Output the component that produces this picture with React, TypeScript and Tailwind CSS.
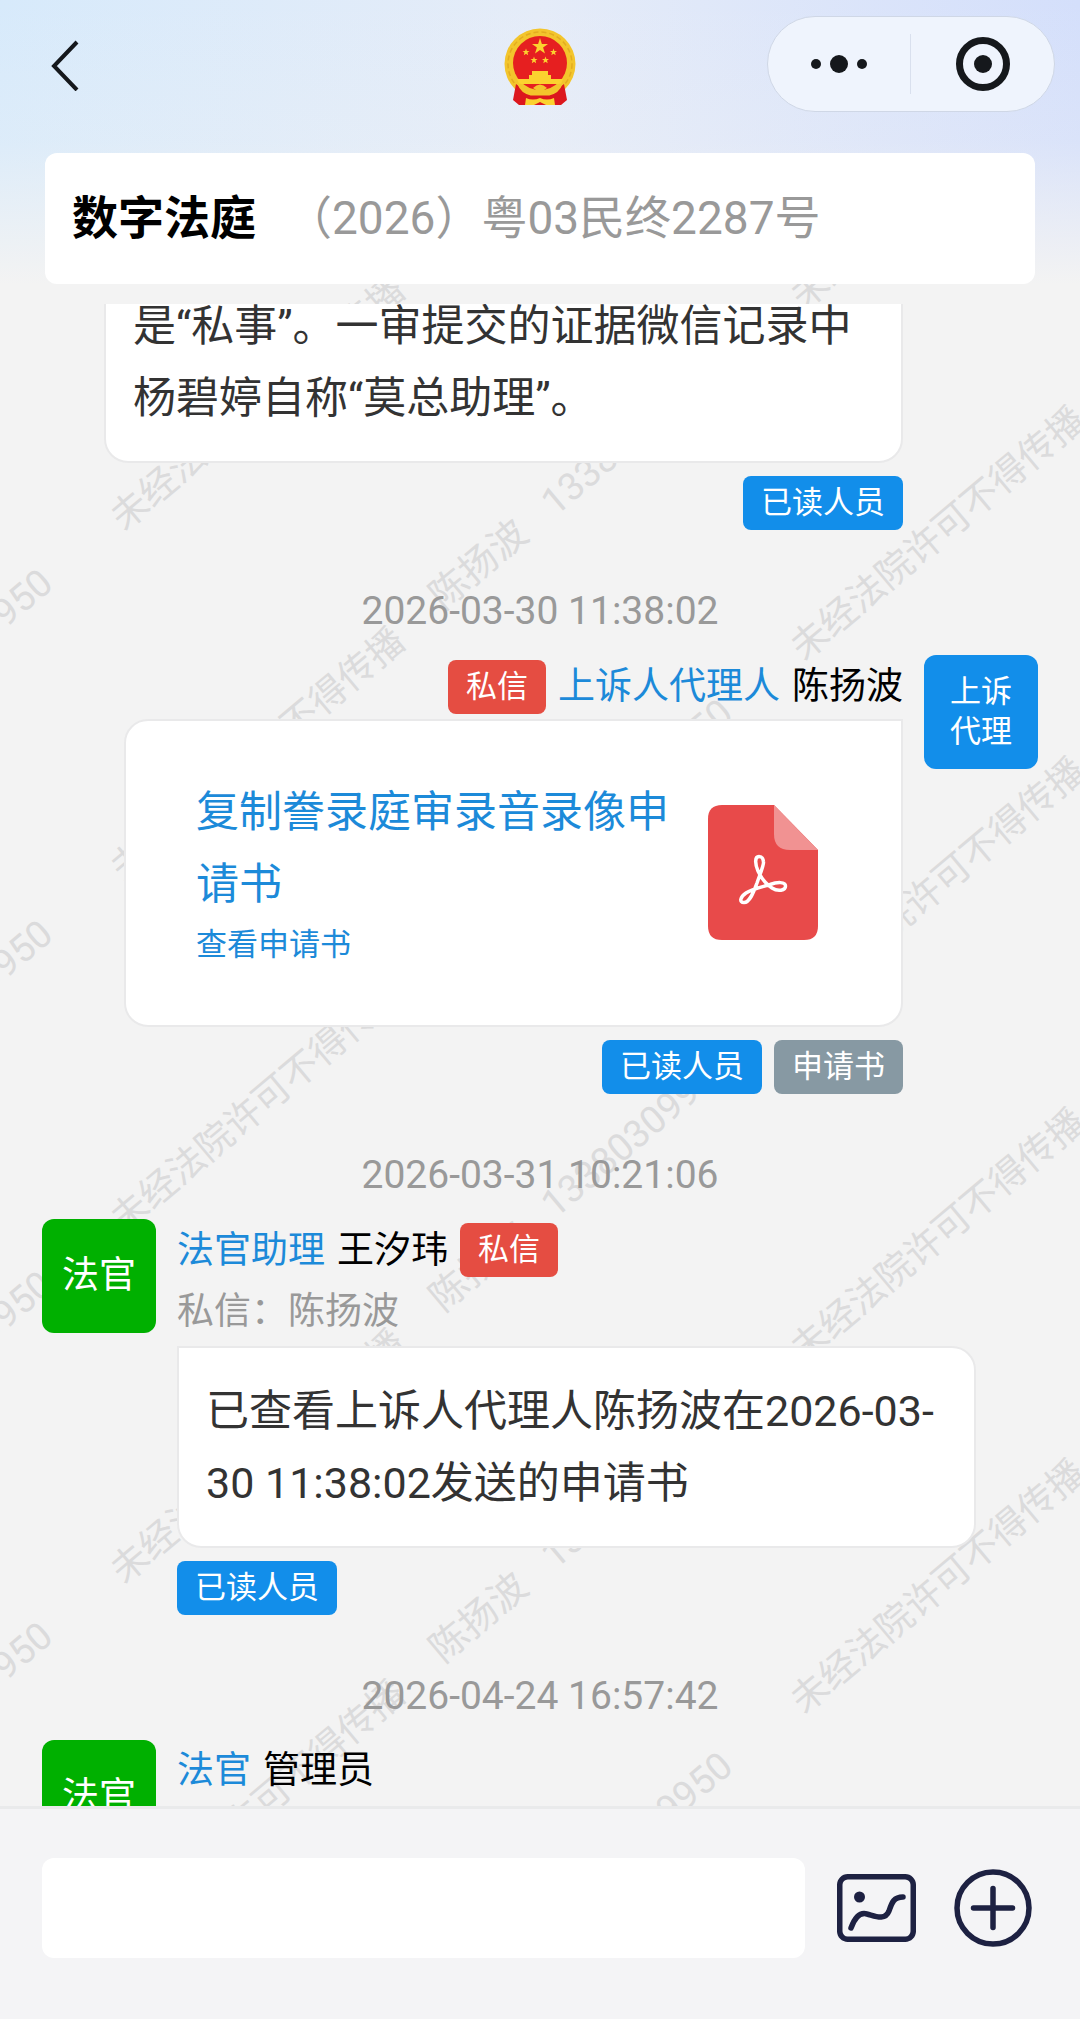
import { type ReactNode } from 'react';
import clsx from 'clsx';

type Side = 'left' | 'right';

// both watermark lines repeat on a slanted grid, [column, first row, last row]
const noticeColumns = [
    [0, 0, 4],
    [1, -1, 4],
];
const ownerColumns = [
    [-1, 1, 4],
    [0, 0, 4],
];

function spread(columns: number[][], x: number, y: number) {
    return columns.flatMap(([col, first, last]) =>
        Array.from({ length: last - first + 1 }, (_, i) => ({
            left: x + col * 680,
            top: y + col * 130 + (first + i) * 351,
        })),
    );
}

const notices = spread(noticeColumns, 116, 220);
const owners = spread(ownerColumns, 435, 298);

function Watermark() {
    return (
        <div aria-hidden="true" className="pointer-events-none absolute inset-0 overflow-hidden leading-none whitespace-nowrap text-[#dbdbdc]">
            {notices.map((pos) => (
                <div key={`${pos.left}:${pos.top}`} className="absolute origin-left -rotate-40 text-[37px]" style={pos}>
                    未经法院许可不得传播
                </div>
            ))}
            {owners.map((pos) => (
                <div key={`${pos.left}:${pos.top}`} className="absolute flex origin-left -rotate-40 gap-8 text-[38px]" style={pos}>
                    <span>陈扬波</span>
                    <span>13380309950</span>
                </div>
            ))}
        </div>
    );
}

function Emblem() {
    return (
        <svg viewBox="0 -6 72 84" className="h-[84px] w-[72px]" role="img" aria-label="国徽">
            <circle cx="36" cy="36" r="35.5" fill="#f3c52c" />
            <circle cx="36" cy="36" r="32" fill="none" stroke="#e3ac20" strokeWidth="1.5" strokeDasharray="5 3" />
            <circle cx="36" cy="35" r="27" fill="#e61f20" />
            <path d="M36 10 L37.9 16 H44 L39.1 19.6 L41 25.5 L36 21.9 L31 25.5 L32.9 19.6 L28 16 H34.1Z" fill="#fbd22f" />
            <g fill="#fbd22f">
                <path id="star" d="M22 20.5 L22.9 22.9 L25.5 23 L23.5 24.6 L24.2 27.2 L22 25.7 L19.8 27.2 L20.5 24.6 L18.5 23 L21.1 22.9Z" />
                <use href="#star" x="27.5" />
                <use href="#star" x="8" y="8" />
                <use href="#star" x="19.5" y="8" />
            </g>
            <path d="M28 43 H44 V47 H47 V51 H59 L57 56 H15 L13 51 H25 V47 H28Z" fill="#fbd22f" />
            <path d="M12 56 L27 67 H45 L60 56 L63 72 L57 77 H15 L9 72Z" fill="#dc171d" />
            <path d="M15 56 Q18 64 27 66 H45 Q54 64 57 56" fill="none" stroke="#f3c52c" strokeWidth="3" />
            <path d="M29 60 Q36 53 43 60 L40 62 H32Z" fill="#f3c52c" />
            <path d="M22 70 Q29 73 36 70 Q43 73 50 70 L51 77 H42 L36 74 L30 77 H21Z" fill="#fbd22f" />
        </svg>
    );
}

function PdfIcon() {
    return (
        <svg viewBox="0 0 110 135" className="h-[135px] w-[110px] shrink-0" aria-hidden="true">
            <path d="M14 0 H66 L110 45 V121 Q110 135 96 135 H14 Q0 135 0 121 V14 Q0 0 14 0Z" fill="#e84a4a" />
            <path d="M66 0 L110 45 H82 Q66 45 66 29Z" fill="#f19292" />
            <path
                d="M51 51.5 C46.5 51.5 47 59 50 66 C53 73 58 79 64 83 C70 87 77.5 85.5 77.5 81 C77.5 76.5 69 77 62 79.5 C54 82 44 84 38 88 C32 92 31 97.500 36 97.500 C42 97.500 46 86 49 78 C52 69 56 60 55.500 57 C55 53 54 51.500 51 51.500Z"
                fill="none"
                stroke="#fff"
                strokeWidth="3.5"
                strokeLinejoin="round"
            />
        </svg>
    );
}

function Timestamp({ children }: { children: ReactNode }) {
    return <time className="mt-[58px] mb-[21px] block text-center text-[39px] leading-[46px] text-[#999]">{children}</time>;
}

function PrivateTag() {
    return <span className="rounded-lg bg-[#e54d42] px-[18px] text-[31px] leading-[54px] text-white">私信</span>;
}

function Label({ children, grey }: { children: ReactNode; grey?: boolean }) {
    return (
        <button className={clsx('rounded-lg px-[18px] text-[31px] leading-[54px] text-white', grey ? 'bg-[#8799a3]' : 'bg-[#128eea]')}>
            {children}
        </button>
    );
}

function Avatar({ children, side }: { children: ReactNode; side: Side }) {
    return (
        <div
            className={clsx(
                'flex size-[114px] shrink-0 items-center justify-center rounded-xl text-center text-white',
                side === 'left' ? 'bg-[#00b000] text-[37px]' : 'bg-[#128eea] px-[26px] text-[31px] leading-[40px]',
            )}
        >
            {children}
        </div>
    );
}

function Bubble({ children, side, className }: { children: ReactNode; side: Side; className?: string }) {
    return (
        <div
            className={clsx(
                'rounded-3xl border-2 border-[#e9e9ea] bg-white text-[43px] leading-[72px] text-[#333]',
                side === 'left' ? 'rounded-tl-none' : 'rounded-tr-none',
                className,
            )}
        >
            {children}
        </div>
    );
}

function Message({ avatar, side, children }: { avatar: ReactNode; side: Side; children?: ReactNode }) {
    return (
        <div className={clsx('flex gap-[21px]', side === 'right' && 'flex-row-reverse')}>
            <Avatar side={side}>{avatar}</Avatar>
            <div className={clsx('flex min-w-0 flex-1 flex-col pt-1', side === 'left' ? 'pr-[62px]' : 'pl-[62px]')}>{children}</div>
        </div>
    );
}

function Header() {
    return (
        <header className="bg-linear-to-r from-[#d7eafb] via-[#e5ecf8] to-[#d4dffb]">
            <div className="bg-linear-to-b from-transparent via-[#f3f3f3]/20 via-50% to-[#f3f3f3] px-[45px] pt-4">
                <div className="-mr-5 grid h-24 grid-cols-3 items-center">
                    <button aria-label="返回" className="justify-self-start">
                        <svg viewBox="0 0 40 54" className="h-[54px] w-10" fill="none" stroke="#15181c" strokeWidth="4">
                            <path d="M32 5 L9 29 L32 53" />
                        </svg>
                    </button>
                    <div className="-ml-5 justify-self-center">
                        <Emblem />
                    </div>
                    <div className="flex h-24 w-72 items-center justify-self-end rounded-full border border-[#cfd7e6] bg-[#eff4fd]">
                        <button aria-label="更多" className="flex flex-1 items-center justify-center gap-[9px]">
                            <span className="size-[10px] rounded-full bg-[#15181c]" />
                            <span className="size-[18px] rounded-full bg-[#15181c]" />
                            <span className="size-[10px] rounded-full bg-[#15181c]" />
                        </button>
                        <span className="h-[60px] w-px bg-[#d9e0ee]" />
                        <button aria-label="关闭" className="flex flex-1 justify-center">
                            <span className="flex size-[54px] items-center justify-center rounded-full border-[7px] border-[#15181c]">
                                <span className="size-[18px] rounded-full bg-[#15181c]" />
                            </span>
                        </button>
                    </div>
                </div>
                <div className="mt-[41px] flex h-[131px] items-center gap-[30px] rounded-xl bg-white px-[27px] text-[46px]">
                    <h1 className="font-bold text-black">数字法庭</h1>
                    <span className="text-[#999]">（2026）粤03民终2287号</span>
                </div>
            </div>
        </header>
    );
}

function Footer() {
    return (
        <footer className="flex items-start gap-8 border-t-[3px] border-[#e9eaeb] bg-[#f4f4f6] px-[42px] pt-[49px] pb-[61px]">
            <input aria-label="消息" className="h-[100px] min-w-0 flex-1 rounded-xl bg-white px-6 text-[43px] outline-none" />
            <div className="flex h-[100px] items-center gap-[38px] pr-[6px]">
                <button aria-label="图片">
                    <svg viewBox="0 0 79 68" className="h-[68px] w-[79px]" fill="none" stroke="#1d2142" strokeWidth="5.5" strokeLinecap="round">
                        <rect x="2.75" y="2.75" width="73.5" height="62.5" rx="8" />
                        <circle cx="22.5" cy="23" r="5.5" fill="#1d2142" stroke="none" />
                        <path d="M14 54 C18 43 23 38 30 40 C38 42 48 47 52 37 C55 28 57 23 66 23" />
                    </svg>
                </button>
                <button aria-label="添加">
                    <svg viewBox="0 0 78 78" className="size-[78px]" fill="none" stroke="#1d2142" strokeWidth="5.5" strokeLinecap="round">
                        <circle cx="39" cy="39" r="36" />
                        <path d="M39 19.5 V58.5 M19.5 39 H58.5" />
                    </svg>
                </button>
            </div>
        </footer>
    );
}

export default function App() {
    return (
        <div lang="zh-CN" className="flex h-screen flex-col overflow-hidden bg-[#f3f3f3] font-[Roboto,'Noto_Sans_CJK_SC',sans-serif] text-black">
            <Header />
            <main className="relative min-h-0 flex-1 pt-5">
                <Watermark />
                <div className="relative h-full overflow-hidden px-[42px]">
                    {/* list is scrolled a little, so the first bubble is cut at the top */}
                    <div className="-mt-[43px]">
                        <div className="flex flex-col pr-[135px] pl-[62px]">
                            <Bubble side="right" className="px-[27px] py-[27px]">
                                是“私事”。一审提交的证据微信记录中杨碧婷自称“莫总助理”。
                            </Bubble>
                            <div className="mt-[13px] flex justify-end">
                                <Label>已读人员</Label>
                            </div>
                        </div>

                        <Timestamp>2026-03-30 11:38:02</Timestamp>
                        <Message side="right" avatar="上诉代理">
                            <div className="flex items-center justify-end gap-3 text-[37px]">
                                <PrivateTag />
                                <span className="text-[#1c8ad9]">上诉人代理人</span>
                                <span>陈扬波</span>
                            </div>
                            <Bubble side="right" className="mt-1 ml-5 flex items-center gap-8 py-[55px] pr-[83px] pl-[70px]">
                                <div className="flex-1 text-[#1c8ad9]">
                                    <p>复制誊录庭审录音录像申请书</p>
                                    <a href="#application" className="block text-[31px] leading-[50px]">
                                        查看申请书
                                    </a>
                                </div>
                                <PdfIcon />
                            </Bubble>
                            <div className="mt-[13px] flex justify-end gap-3">
                                <Label>已读人员</Label>
                                <Label grey>申请书</Label>
                            </div>
                        </Message>

                        <Timestamp>2026-03-31 10:21:06</Timestamp>
                        <Message side="left" avatar="法官">
                            <div className="flex items-center gap-3 text-[37px]">
                                <span className="text-[#1c8ad9]">法官助理</span>
                                <span>王汐玮</span>
                                <PrivateTag />
                            </div>
                            <p className="text-[37px] leading-[68px] text-[#999]">私信：陈扬波</p>
                            <Bubble side="left" className="px-[27px] py-[27px]">
                                已查看上诉人代理人陈扬波在2026-03-30 11:38:02发送的申请书
                            </Bubble>
                            <div className="mt-[13px] flex">
                                <Label>已读人员</Label>
                            </div>
                        </Message>

                        <Timestamp>2026-04-24 16:57:42</Timestamp>
                        <Message side="left" avatar="法官">
                            <div className="flex items-center gap-3 text-[37px] leading-[54px]">
                                <span className="text-[#1c8ad9]">法官</span>
                                <span>管理员</span>
                            </div>
                        </Message>
                    </div>
                </div>
            </main>
            <Footer />
        </div>
    );
}
